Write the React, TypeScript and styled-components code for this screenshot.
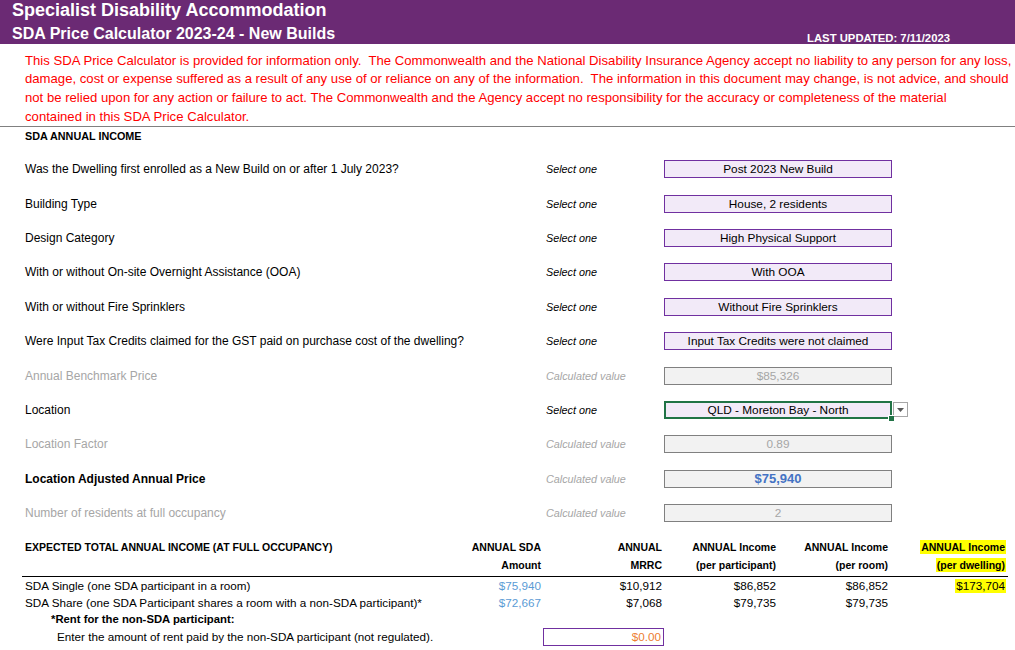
import React from "react";
import styled, { createGlobalStyle } from "styled-components";

const GlobalStyle = createGlobalStyle`
  html, body { margin: 0; padding: 0; background: #ffffff; }
  body { font-family: "Liberation Sans", Arial, sans-serif; color: #000; }
  * { box-sizing: border-box; }
`;

const Page = styled.div`
  width: 1015px;
  height: 650px;
  overflow: hidden;
`;

const Banner = styled.header`
  height: 44px;
  background: #6b2a74;
  color: #ffffff;
  display: flex;
  justify-content: space-between;
  align-items: flex-end;
  padding: 0 65px 0 12px;
`;

const TitleBlock = styled.div`
  display: flex;
  flex-direction: column;
  gap: 4px;
`;

const Title = styled.div`
  font-size: 18px;
  font-weight: 700;
  line-height: 20px;
  white-space: nowrap;
`;

const Subtitle = styled.div`
  font-size: 16px;
  font-weight: 700;
  line-height: 20px;
  white-space: nowrap;
`;

const Updated = styled.div`
  font-size: 11.3px;
  font-weight: 700;
  line-height: 12px;
  white-space: nowrap;
`;

const Disclaimer = styled.div`
  height: 83px;
  padding: 7.5px 0 0 25px;
  border-bottom: 1px solid #808080;
  color: #ff0000;
  font-size: 13.15px;
  line-height: 18.9px;
`;

const DisclaimerLine = styled.div`
  white-space: pre;
`;

const SectionHeading = styled.div`
  height: 25px;
  padding: 1px 0 0 25px;
  font-size: 10.8px;
  font-weight: 700;
  line-height: 16px;
`;

const FormRow = styled.div`
  display: grid;
  grid-template-columns: 521px 118px 228px auto;
  align-items: center;
  height: 34.4px;
  padding-left: 25px;
`;

type Tone = "normal" | "muted" | "strong";

const Label = styled.div<{ $tone: Tone }>`
  font-size: 12px;
  line-height: 14px;
  white-space: nowrap;
  font-weight: ${(p) => (p.$tone === "strong" ? 700 : 400)};
  color: ${(p) => (p.$tone === "muted" ? "#a6a6a6" : "#000000")};
`;

const Hint = styled.div<{ $muted: boolean }>`
  font-size: 10.8px;
  font-style: italic;
  line-height: 14px;
  white-space: nowrap;
  color: ${(p) => (p.$muted ? "#a6a6a6" : "#000000")};
`;

type BoxKind = "select" | "calc" | "total";

const ValueBox = styled.div<{ $kind: BoxKind }>`
  position: relative;
  height: 18px;
  border: 1px solid ${(p) => (p.$kind === "select" ? "#7030a0" : "#808080")};
  background: ${(p) => (p.$kind === "select" ? "#f2eaf8" : "#f2f2f2")};
  color: ${(p) =>
    p.$kind === "select" ? "#000000" : p.$kind === "total" ? "#4472c4" : "#a6a6a6"};
  font-size: ${(p) => (p.$kind === "total" ? "13px" : "11.8px")};
  font-weight: ${(p) => (p.$kind === "total" ? 700 : 400)};
  line-height: 16px;
  text-align: center;
  white-space: nowrap;
`;

const Selection = styled.span`
  position: absolute;
  inset: -1px;
  border: 2px solid #217346;
  pointer-events: none;
`;

const FillHandle = styled.span`
  position: absolute;
  right: -3px;
  bottom: -3px;
  width: 6px;
  height: 6px;
  background: #217346;
  border-left: 1px solid #ffffff;
  border-top: 1px solid #ffffff;
`;

const DropButton = styled.div`
  width: 15px;
  height: 15px;
  margin-left: 1px;
  border: 1px solid #a6a6a6;
  background: #ffffff;
  display: flex;
  align-items: center;
  justify-content: center;
`;

const IncomeTable = styled.div`
  margin: 0 7px 0 22px;
  padding-top: 9px;
`;

const columns = "408px 111px 121px 114px 112px 120px";

const TableHead = styled.div`
  display: grid;
  grid-template-columns: ${columns};
  border-bottom: 1px solid #000000;
  padding-bottom: 1px;
  font-size: 10.5px;
  font-weight: 700;
  line-height: 17.7px;
  white-space: nowrap;
`;

const HeadCell = styled.div<{ $align: "left" | "right"; $last?: boolean }>`
  text-align: ${(p) => p.$align};
  padding-left: ${(p) => (p.$align === "left" ? "3px" : "0")};
  padding-right: ${(p) => (p.$last ? "2px" : "0")};
`;

const TableRow = styled.div<{ $tall?: boolean }>`
  display: grid;
  grid-template-columns: ${columns};
  align-items: center;
  font-size: 11.7px;
  line-height: 17px;
  height: ${(p) => (p.$tall ? "18px" : "17px")};
  white-space: nowrap;
`;

const RowLabel = styled.div<{ $indent: number; $bold?: boolean; $span: number }>`
  grid-column: 1 / span ${(p) => p.$span};
  padding-left: ${(p) => p.$indent}px;
  font-weight: ${(p) => (p.$bold ? 700 : 400)};
  font-size: ${(p) => (p.$bold ? "11.3px" : "11.7px")};
`;

const Num = styled.div<{ $blue?: boolean; $last?: boolean }>`
  text-align: right;
  color: ${(p) => (p.$blue ? "#5b9bd5" : "#000000")};
  padding-right: ${(p) => (p.$last ? "2px" : "0")};
`;

const Highlight = styled.span`
  display: inline-block;
  background: #ffff00;
  line-height: 14px;
  padding: 0 1px;
`;

const RentInput = styled.div`
  width: 121px;
  height: 18px;
  margin-left: 2px;
  border: 1px solid #7030a0;
  background: #ffffff;
  color: #ed7d31;
  text-align: right;
  padding-right: 2px;
  line-height: 16px;
`;

type FormItem = {
  label: string;
  tone: Tone;
  hint: "select" | "calc";
  value: string;
  kind: BoxKind;
  active?: boolean;
};

const formItems: FormItem[] = [
  { label: "Was the Dwelling first enrolled as a New Build on or after 1 July 2023?", tone: "normal", hint: "select", value: "Post 2023 New Build", kind: "select" },
  { label: "Building Type", tone: "normal", hint: "select", value: "House, 2 residents", kind: "select" },
  { label: "Design Category", tone: "normal", hint: "select", value: "High Physical Support", kind: "select" },
  { label: "With or without On-site Overnight Assistance (OOA)", tone: "normal", hint: "select", value: "With OOA", kind: "select" },
  { label: "With or without Fire Sprinklers", tone: "normal", hint: "select", value: "Without Fire Sprinklers", kind: "select" },
  { label: "Were Input Tax Credits claimed for the GST paid on purchase cost of the dwelling?", tone: "normal", hint: "select", value: "Input Tax Credits were not claimed", kind: "select" },
  { label: "Annual Benchmark Price", tone: "muted", hint: "calc", value: "$85,326", kind: "calc" },
  { label: "Location", tone: "normal", hint: "select", value: "QLD - Moreton Bay - North", kind: "select", active: true },
  { label: "Location Factor", tone: "muted", hint: "calc", value: "0.89", kind: "calc" },
  { label: "Location Adjusted Annual Price", tone: "strong", hint: "calc", value: "$75,940", kind: "total" },
  { label: "Number of residents at full occupancy", tone: "muted", hint: "calc", value: "2", kind: "calc" },
];

type IncomeRow = {
  label: string;
  sda: string;
  mrrc: string;
  perParticipant: string;
  perRoom: string;
  perDwelling?: string;
};

const incomeRows: IncomeRow[] = [
  { label: "SDA Single (one SDA participant in a room)", sda: "$75,940", mrrc: "$10,912", perParticipant: "$86,852", perRoom: "$86,852", perDwelling: "$173,704" },
  { label: "SDA Share (one SDA Participant shares a room with a non-SDA participant)*", sda: "$72,667", mrrc: "$7,068", perParticipant: "$79,735", perRoom: "$79,735" },
];

const disclaimer = [
  "This SDA Price Calculator is provided for information only.  The Commonwealth and the National Disability Insurance Agency accept no liability to any person for any loss,",
  "damage, cost or expense suffered as a result of any use of or reliance on any of the information.  The information in this document may change, is not advice, and should",
  "not be relied upon for any action or failure to act. The Commonwealth and the Agency accept no responsibility for the accuracy or completeness of the material",
  "contained in this SDA Price Calculator.",
];

const DropArrow = () => (
  <svg width="7" height="4" viewBox="0 0 7 4">
    <polygon points="0,0 7,0 3.5,4" fill="#595959" />
  </svg>
);

export default function App() {
  return (
    <Page>
      <GlobalStyle />
      <Banner>
        <TitleBlock>
          <Title>Specialist Disability Accommodation</Title>
          <Subtitle>SDA Price Calculator 2023-24 - New Builds</Subtitle>
        </TitleBlock>
        <Updated>LAST UPDATED: 7/11/2023</Updated>
      </Banner>

      <Disclaimer>
        {disclaimer.map((line) => (
          <DisclaimerLine key={line}>{line}</DisclaimerLine>
        ))}
      </Disclaimer>

      <SectionHeading>SDA ANNUAL INCOME</SectionHeading>

      {formItems.map((item) => (
        <FormRow key={item.label}>
          <Label $tone={item.tone}>{item.label}</Label>
          <Hint $muted={item.hint === "calc"}>
            {item.hint === "select" ? "Select one" : "Calculated value"}
          </Hint>
          <ValueBox $kind={item.kind}>
            {item.value}
            {item.active && (
              <>
                <Selection />
                <FillHandle />
              </>
            )}
          </ValueBox>
          {item.active ? (
            <DropButton>
              <DropArrow />
            </DropButton>
          ) : (
            <span />
          )}
        </FormRow>
      ))}

      <IncomeTable>
        <TableHead>
          <HeadCell $align="left">
            <div>EXPECTED TOTAL ANNUAL INCOME (AT FULL OCCUPANCY)</div>
          </HeadCell>
          <HeadCell $align="right">
            <div>ANNUAL SDA</div>
            <div>Amount</div>
          </HeadCell>
          <HeadCell $align="right">
            <div>ANNUAL</div>
            <div>MRRC</div>
          </HeadCell>
          <HeadCell $align="right">
            <div>ANNUAL Income</div>
            <div>(per participant)</div>
          </HeadCell>
          <HeadCell $align="right">
            <div>ANNUAL Income</div>
            <div>(per room)</div>
          </HeadCell>
          <HeadCell $align="right" $last>
            <div>
              <Highlight>ANNUAL Income</Highlight>
            </div>
            <div>
              <Highlight>(per dwelling)</Highlight>
            </div>
          </HeadCell>
        </TableHead>

        {incomeRows.map((row) => (
          <TableRow key={row.label}>
            <RowLabel $indent={3} $span={1}>{row.label}</RowLabel>
            <Num $blue>{row.sda}</Num>
            <Num>{row.mrrc}</Num>
            <Num>{row.perParticipant}</Num>
            <Num>{row.perRoom}</Num>
            <Num $last>{row.perDwelling ? <Highlight>{row.perDwelling}</Highlight> : null}</Num>
          </TableRow>
        ))}

        <TableRow>
          <RowLabel $indent={29} $bold $span={6}>*Rent for the non-SDA participant:</RowLabel>
        </TableRow>
        <TableRow $tall>
          <RowLabel $indent={35} $span={2}>
            Enter the amount of rent paid by the non-SDA participant (not regulated).
          </RowLabel>
          <RentInput>$0.00</RentInput>
        </TableRow>
      </IncomeTable>
    </Page>
  );
}
